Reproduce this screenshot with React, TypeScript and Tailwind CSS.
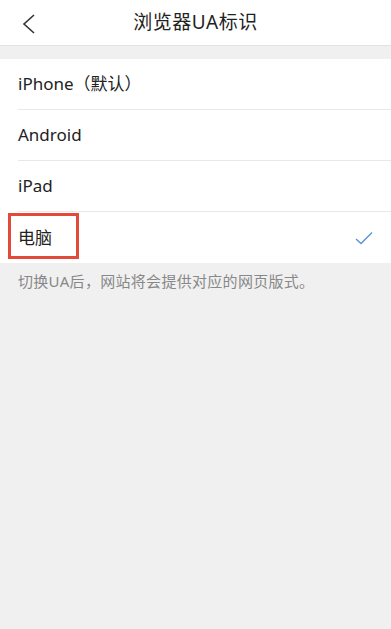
import React from "react";

const font = { fontFamily: '"Noto Sans", "Noto Sans CJK SC", sans-serif' };

function Row({ label, last, checked, boxed }: { label: string; last?: boolean; checked?: boolean; boxed?: boolean }) {
  return (
    <div className="relative h-[51px] pl-[18px] bg-white">
      <div className={`h-full flex items-center pr-[18px] ${last ? "" : "border-b border-[#e8e8e8]"}`}>
        <span className="text-[17px] text-[#222] flex-1">{label}</span>
        {checked && (
          <svg width="18" height="14" viewBox="0 0 18 14">
            <path d="M1 8 L6 12.5 L17 1.5" fill="none" stroke="#5b93d8" strokeWidth="1.4" />
          </svg>
        )}
      </div>
      {boxed && (
        <div className="absolute left-[8px] top-[1px] w-[71px] h-[46px] border-[3px] border-[#e34a3a]" />
      )}
    </div>
  );
}

export default function App() {
  return (
    <div className="w-[391px] h-[629px] bg-[#f0f0f0] flex flex-col" style={font}>
      <div className="h-[46px] bg-white border-b border-[#e3e3e3] relative flex items-center justify-center">
        <svg className="absolute left-[22px] top-[14px]" width="14" height="20" viewBox="0 0 14 20">
          <path d="M12 1 L2 10 L12 19" fill="none" stroke="#333" strokeWidth="1.6" />
        </svg>
        <span className="text-[19px] text-[#222] tracking-[0.5px]">浏览器UA标识</span>
      </div>
      <div className="h-[13px]" />
      <div className="bg-white">
        <Row label="iPhone（默认）" />
        <Row label="Android" />
        <Row label="iPad" />
        <Row label="电脑" last checked boxed />
      </div>
      <div className="px-[18px] pt-[7px] text-[15px] text-[#888] tracking-[0.3px]">切换UA后，网站将会提供对应的网页版式。</div>
    </div>
  );
}
